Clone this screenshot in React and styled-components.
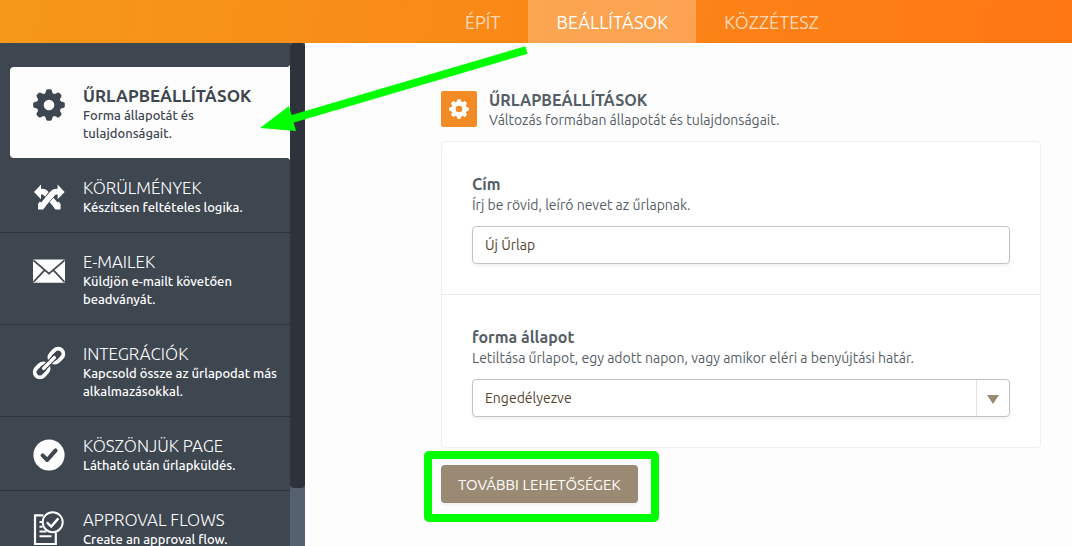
import React, { useState } from 'react';
import styled, { createGlobalStyle, css } from 'styled-components';

const GlobalStyle = createGlobalStyle`
  * {
    box-sizing: border-box;
  }

  body {
    margin: 0;
    background-color: #fdfdfd;
    color: #555e66;
    font-family: Ubuntu, 'Noto Sans', sans-serif;
    font-size: 14px;
  }

  input, select, button {
    font-family: inherit;
    font-size: 14px;
  }
`;

const Page = styled.div`
  display: flex;
  flex-direction: column;
  height: 100vh;
  overflow: hidden;
  position: relative;
`;

const TopBar = styled.header`
  flex: none;
  height: 43px;
  padding-left: 437px;
  background: linear-gradient(100deg, #f59819 0%, #ff7715 100%);
`;

const Tabs = styled.nav`
  display: flex;
  height: 100%;
`;

const Tab = styled.a`
  display: flex;
  align-items: center;
  justify-content: center;
  padding: 0 28px;
  font-size: 18px;
  text-decoration: none;
  color: ${(props) => (props.$active ? '#fff' : 'rgba(255, 255, 255, 0.7)')};
  background-color: ${(props) => (props.$active ? 'rgba(255, 255, 255, 0.25)' : 'transparent')};
`;

const Body = styled.div`
  display: flex;
  flex: 1;
  min-height: 0;
`;

const Sidebar = styled.aside`
  display: flex;
  flex: none;
  width: 305px;
  background-color: #3e4650;
`;

const Menu = styled.nav`
  flex: 1;
  padding-top: 24px;
  overflow: hidden;
`;

const ScrollTrack = styled.div`
  width: 15px;
  background-color: #556070;
`;

const ScrollThumb = styled.div`
  height: calc(100% - 58px);
  border-radius: 4px;
  background-color: #2e323a;
`;

const activeItem = css`
  position: relative;
  margin-left: 10px;
  padding-left: 23px;
  border-radius: 4px 0 0 4px;
  border-bottom: none;
  margin-bottom: 1px;
  background-color: #fdfdfd;
  color: #3e4650;

  &::before,
  &::after {
    content: '';
    position: absolute;
    right: 0;
    width: 2px;
    height: 2px;
    background-color: #fdfdfd;
  }

  &::before {
    top: -2px;
    clip-path: polygon(100% 0, 100% 100%, 0 100%);
  }

  &::after {
    bottom: -2px;
    clip-path: polygon(0 0, 100% 0, 100% 100%);
  }
`;

const MenuItem = styled.a`
  display: flex;
  gap: 18px;
  padding: 18px 8px 16px 33px;
  border-bottom: 1px solid #2e343d;
  color: #fff;
  text-decoration: none;

  svg {
    flex: none;
    margin-top: 4px;
    overflow: visible;
  }

  ${(props) => props.$active && activeItem}
`;

const ItemTitle = styled.div`
  font-size: 17px;
  line-height: 21px;
  font-weight: ${(props) => (props.$active ? 700 : 300)};
`;

const ItemText = styled.div`
  font-size: 13px;
  line-height: 18px;
  font-weight: 500;
`;

const Content = styled.main`
  flex: 1;
  min-width: 0;
  padding: 48px 31px 0 136px;
`;

const Heading = styled.div`
  display: flex;
  gap: 12px;
  margin-bottom: 10px;
`;

const HeadingIcon = styled.div`
  display: flex;
  align-items: center;
  justify-content: center;
  width: 36px;
  height: 36px;
  border-radius: 2px;
  background-color: #f28b25;
  color: #fff;
`;

const HeadingTitle = styled.h1`
  margin: 0;
  font-size: 16px;
  line-height: 18px;
  font-weight: 700;
`;

const HeadingText = styled.p`
  margin: 0;
  line-height: 22px;
`;

const Card = styled.form`
  border: 1px solid #f0f0f0;
  border-radius: 4px;
  background-color: #fff;
`;

const Field = styled.div`
  display: flex;
  flex-direction: column;
  padding: 30px;

  & + & {
    border-top: 1px solid #e8e8e8;
  }
`;

const Label = styled.label`
  font-size: 16px;
  line-height: 24px;
  font-weight: 700;
`;

const Hint = styled.p`
  margin: 0 0 12px;
  line-height: 18px;
`;

const control = css`
  width: 100%;
  height: 38px;
  padding: 0 12px;
  border: 1px solid #c3c3c3;
  border-radius: 4px;
  background-color: #fff;
  color: #54432d;
  box-shadow: 0 2px 3px rgba(0, 0, 0, 0.06);
`;

const TextInput = styled.input`
  ${control}
`;

const SelectBox = styled.div`
  position: relative;
`;

const Select = styled.select`
  ${control}
  appearance: none;
`;

const SelectArrow = styled.span`
  position: absolute;
  top: 1px;
  right: 1px;
  bottom: 1px;
  display: flex;
  align-items: center;
  justify-content: center;
  width: 33px;
  border-left: 1px solid #e3e3e3;
  pointer-events: none;

  &::after {
    content: '';
    margin-top: 2px;
    border: 6px solid transparent;
    border-top: 9px solid #9b8a73;
    border-bottom: none;
  }
`;

const MoreBox = styled.div`
  position: relative;
  display: inline-block;
  margin-top: 17px;
`;

const MoreButton = styled.button`
  height: 38px;
  padding: 0 17px;
  border: none;
  border-radius: 4px;
  background-color: #9b8a73;
  color: #fff;
  font-size: 15px;
  box-shadow: 0 2px 3px rgba(0, 0, 0, 0.06);
  cursor: pointer;
`;

const Highlight = styled.div`
  position: absolute;
  top: -14px;
  right: -21px;
  bottom: -19px;
  left: -17px;
  border: 8px solid #00ff00;
  border-radius: 5px;
  pointer-events: none;
`;

const Pointer = styled.svg`
  position: absolute;
  top: 43px;
  left: 258px;
  pointer-events: none;
`;

const teeth = [0, 45, 90, 135, 180, 225, 270, 315];

const GearIcon = ({ size = 32 }) => (
  <svg width={size} height={size} viewBox="-16 -16 32 32" fill="currentColor">
    <circle r="8.7" fill="none" stroke="currentColor" strokeWidth="6.8" />
    {teeth.map((angle) => (
      <path
        key={angle}
        transform={`rotate(${angle})`}
        d="M-5 -10.5 Q-3.2 -11.8 -3 -14 Q-2.8 -15.8 -1.4 -15.8 H1.4 Q2.8 -15.8 3 -14 Q3.2 -11.8 5 -10.5 Z"
      />
    ))}
  </svg>
);

const ConditionsIcon = () => (
  <svg width="32" height="32" viewBox="0 0 32 32" fill="none">
    <path d="M6 10.6 H9 Q11.6 10.6 13.2 12.6 L24 25.4" stroke="#fff" strokeWidth="5.8" />
    <path d="M1 11 L8 3.6 V18.2 Z" fill="#fff" />
    <path d="M20 25 L25.8 20.4 L27.6 23 V27.4 Q27.6 28.6 26.4 28.6 H22.4 Z" fill="#fff" />
    <path d="M24 10.6 H22.4 Q20.6 10.6 19.2 12.6 L11.6 21.8" stroke="#3e4650" strokeWidth="7.2" />
    <path d="M26.6 10.6 H23.6 Q21 10.6 19.4 12.6 L8.6 25.4" stroke="#fff" strokeWidth="5.8" />
    <path d="M31.6 11 L24.6 3.6 V18.2 Z" fill="#fff" />
    <path d="M12.6 25 L6.8 20.4 L5 23 V27.4 Q5 28.6 6.2 28.6 H10.2 Z" fill="#fff" />
  </svg>
);

const MailIcon = () => (
  <svg width="32" height="32" viewBox="0 0 32 32">
    <rect y="4.4" width="32" height="23.4" rx="1" fill="#fff" />
    <path
      d="M0.5 5.4 L16 18.6 L31.5 5.4 M0.5 27 L11.6 15.2 M31.5 27 L20.4 15.2"
      fill="none"
      stroke="#3e4650"
      strokeWidth="1.8"
    />
  </svg>
);

const LinkIcon = () => (
  <svg width="32" height="32" viewBox="-16 -16 32 32" fill="none">
    <g transform="rotate(-45)">
      <rect x="2.7" y="-5.2" width="15.4" height="10.4" rx="5.2" stroke="#fff" strokeWidth="3.8" />
      <rect x="-18.1" y="-5.2" width="15.4" height="10.4" rx="5.2" stroke="#fff" strokeWidth="3.8" />
      <path d="M-8 0 H8" stroke="#3e4650" strokeWidth="5.6" strokeLinecap="round" />
      <path d="M-7.6 0 H7.6" stroke="#fff" strokeWidth="3.4" strokeLinecap="round" />
    </g>
  </svg>
);

const CheckIcon = () => (
  <svg width="32" height="32" viewBox="0 0 32 32" fill="none">
    <circle cx="16" cy="16" r="15.6" fill="#fff" />
    <path
      d="M9.6 16.4 L14.2 21 L22.6 11.4"
      stroke="#3e4650"
      strokeWidth="4"
      strokeLinecap="round"
      strokeLinejoin="round"
    />
  </svg>
);

const ApprovalIcon = () => (
  <svg width="32" height="32" viewBox="0 0 32 32" fill="none" stroke="#fff" strokeWidth="2">
    <path d="M10.5 2.4 H2 V31 H22.8 V20" strokeWidth="2.2" />
    <path d="M6.5 9 H9 M6.5 13.7 H9.6 M6.5 18.4 H13.4 M6.5 23.2 H18.4" />
    <circle cx="19.7" cy="9.2" r="10" />
    <path d="M13.8 9.4 L18.2 13.6 L25.4 5.4" strokeWidth="2.4" />
  </svg>
);

const menuItems = [
  { title: 'ŰRLAPBEÁLLÍTÁSOK', text: 'Forma állapotát és tulajdonságait.', Icon: GearIcon, active: true },
  { title: 'KÖRÜLMÉNYEK', text: 'Készítsen feltételes logika.', Icon: ConditionsIcon },
  { title: 'E-MAILEK', text: 'Küldjön e-mailt követően beadványát.', Icon: MailIcon },
  { title: 'INTEGRÁCIÓK', text: 'Kapcsold össze az űrlapodat más alkalmazásokkal.', Icon: LinkIcon },
  { title: 'KÖSZÖNJÜK PAGE', text: 'Látható után űrlapküldés.', Icon: CheckIcon },
  { title: 'APPROVAL FLOWS', text: 'Create an approval flow.', Icon: ApprovalIcon },
];

const App = () => {
  const [title, setTitle] = useState('Új Űrlap');
  const [status, setStatus] = useState('enabled');

  return (
    <Page>
      <GlobalStyle />
      <TopBar>
        <Tabs>
          <Tab href="#build">ÉPÍT</Tab>
          <Tab href="#settings" $active>BEÁLLÍTÁSOK</Tab>
          <Tab href="#publish">KÖZZÉTESZ</Tab>
        </Tabs>
      </TopBar>

      <Body>
        <Sidebar>
          <Menu>
            {menuItems.map(({ title: itemTitle, text, Icon, active }) => (
              <MenuItem key={itemTitle} href="#settings" $active={active}>
                <Icon />
                <div>
                  <ItemTitle $active={active}>{itemTitle}</ItemTitle>
                  <ItemText>{text}</ItemText>
                </div>
              </MenuItem>
            ))}
          </Menu>
          <ScrollTrack>
            <ScrollThumb />
          </ScrollTrack>
        </Sidebar>

        <Content>
          <Heading>
            <HeadingIcon>
              <GearIcon size={20} />
            </HeadingIcon>
            <div>
              <HeadingTitle>ŰRLAPBEÁLLÍTÁSOK</HeadingTitle>
              <HeadingText>Változás formában állapotát és tulajdonságait.</HeadingText>
            </div>
          </Heading>

          <Card>
            <Field>
              <Label htmlFor="title">Cím</Label>
              <Hint>Írj be rövid, leíró nevet az űrlapnak.</Hint>
              <TextInput id="title" type="text" value={title} onChange={(e) => setTitle(e.target.value)} />
            </Field>
            <Field>
              <Label htmlFor="status">forma állapot</Label>
              <Hint>Letiltása űrlapot, egy adott napon, vagy amikor eléri a benyújtási határ.</Hint>
              <SelectBox>
                <Select id="status" value={status} onChange={(e) => setStatus(e.target.value)}>
                  <option value="enabled">Engedélyezve</option>
                </Select>
                <SelectArrow />
              </SelectBox>
            </Field>
          </Card>

          <MoreBox>
            <MoreButton type="button">TOVÁBBI LEHETŐSÉGEK</MoreButton>
            <Highlight />
          </MoreBox>
        </Content>
      </Body>

      <Pointer width="272" height="92" viewBox="258 43 272 92">
        <path d="M292 119 L526.5 50" stroke="#00ff00" strokeWidth="8" />
        <path d="M260 128 L289 106 L296 131 Z" fill="#00ff00" />
      </Pointer>
    </Page>
  );
};

export default App;
